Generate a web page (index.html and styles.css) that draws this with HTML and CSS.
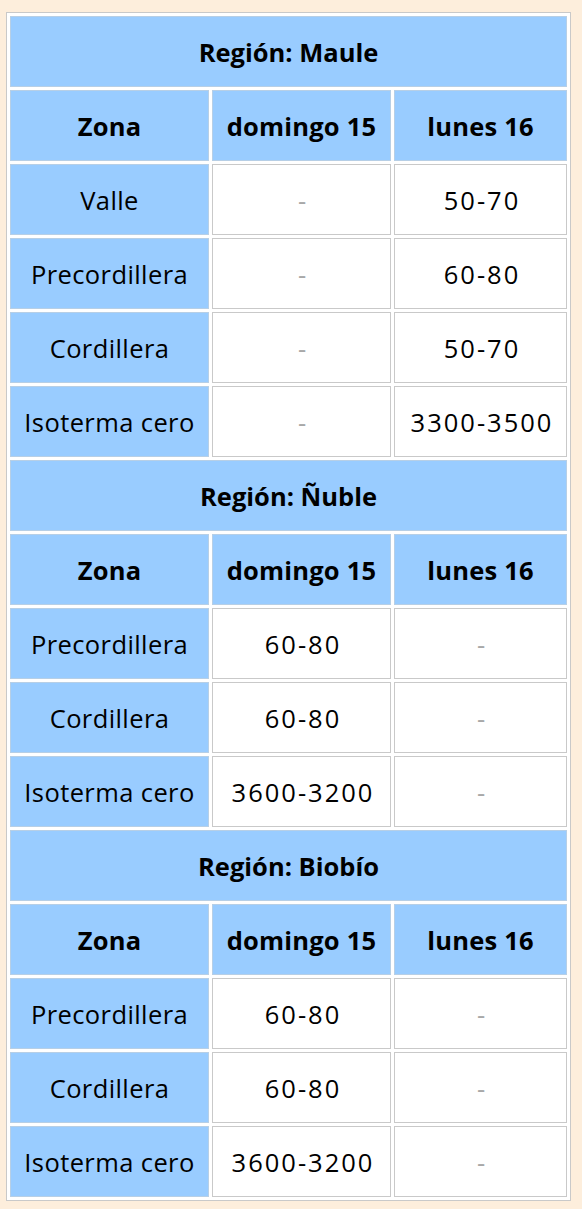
FILE: index.html
```html
<!DOCTYPE html>
<html lang="es">
<head>
<meta charset="utf-8">
<title>Pronóstico</title>
<link rel="stylesheet" href="styles.css">
</head>
<body>
<table class="forecast">
  <colgroup>
    <col class="c1"><col class="c2"><col class="c3">
  </colgroup>
  <tbody>
    <tr><th class="region" colspan="3">Región: Maule</th></tr>
    <tr><th class="head">Zona</th><th class="head">domingo 15</th><th class="head">lunes 16</th></tr>
    <tr><th class="zone">Valle</th><td class="empty">-</td><td>50-70</td></tr>
    <tr><th class="zone">Precordillera</th><td class="empty">-</td><td>60-80</td></tr>
    <tr><th class="zone">Cordillera</th><td class="empty">-</td><td>50-70</td></tr>
    <tr><th class="zone">Isoterma cero</th><td class="empty">-</td><td>3300-3500</td></tr>

    <tr><th class="region" colspan="3">Región: Ñuble</th></tr>
    <tr><th class="head">Zona</th><th class="head">domingo 15</th><th class="head">lunes 16</th></tr>
    <tr><th class="zone">Precordillera</th><td>60-80</td><td class="empty">-</td></tr>
    <tr><th class="zone">Cordillera</th><td>60-80</td><td class="empty">-</td></tr>
    <tr><th class="zone">Isoterma cero</th><td>3600-3200</td><td class="empty">-</td></tr>

    <tr><th class="region" colspan="3">Región: Biobío</th></tr>
    <tr><th class="head">Zona</th><th class="head">domingo 15</th><th class="head">lunes 16</th></tr>
    <tr><th class="zone">Precordillera</th><td>60-80</td><td class="empty">-</td></tr>
    <tr><th class="zone">Cordillera</th><td>60-80</td><td class="empty">-</td></tr>
    <tr><th class="zone">Isoterma cero</th><td>3600-3200</td><td class="empty">-</td></tr>
  </tbody>
</table>
</body>
</html>
```
FILE: styles.css
```css
html, body {
  margin: 0;
  padding: 0;
  background: #fdeedc;
}
body {
  padding: 12px 11px 0 6px;
  font-family: "Open Sans", "Noto Sans", sans-serif;
  color: #000;
}
.forecast {
  table-layout: fixed;
  width: 565px;
  border: 1px solid #c9c9c9;
  border-spacing: 3px;
  background: #fff;
}
.c1 { width: 199px; }
.c2 { width: 179px; }
.c3 { width: 173px; }
.forecast th,
.forecast td {
  box-sizing: border-box;
  height: 71px;
  padding: 1px 4px 0;
  border: 1px solid #c9c9c9;
  text-align: center;
  vertical-align: middle;
  font-size: 25.5px;
  white-space: nowrap;
}
.forecast th {
  background: #99ccff;
  border-color: #b7cfe6;
}
.region {
  font-weight: 700;
  letter-spacing: 0;
}
.head {
  font-weight: 700;
  letter-spacing: 0.2px;
}
.forecast th.zone {
  font-weight: 500;
  letter-spacing: 0.4px;
}
.forecast td {
  background: #fff;
  font-weight: 500;
  letter-spacing: 2px;
  text-indent: 3px;
}
.forecast td.empty {
  color: #a8a8a8;
  font-weight: 400;
}
```
